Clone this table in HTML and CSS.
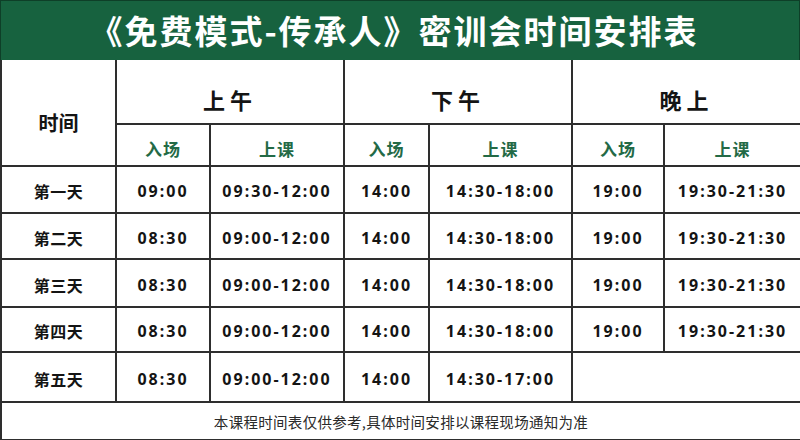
FILE: index.html
```html
<!DOCTYPE html>
<html lang="zh">
<head>
<meta charset="utf-8">
<title>密训会时间安排表</title>
<link rel="stylesheet" href="styles.css">
</head>
<body>
<div class="sheet">
  <div class="title">《免费模式-传承人》密训会时间安排表</div>
  <table class="grid">
    <colgroup>
      <col class="c1"><col class="c2"><col class="c3"><col class="c4"><col class="c5"><col class="c6"><col class="c7">
    </colgroup>
    <tr class="r-period">
      <td rowspan="2" class="label-time"><span>时间</span></td>
      <td colspan="2" class="period">上午</td>
      <td colspan="2" class="period">下午</td>
      <td colspan="2" class="period">晚上</td>
    </tr>
    <tr class="r-sub">
      <td class="sub">入场</td><td class="sub">上课</td>
      <td class="sub">入场</td><td class="sub">上课</td>
      <td class="sub">入场</td><td class="sub">上课</td>
    </tr>
    <tr class="r-d1">
      <td class="day">第一天</td><td class="t">09:00</td><td class="t">09:30-12:00</td><td class="t">14:00</td><td class="t">14:30-18:00</td><td class="t">19:00</td><td class="t">19:30-21:30</td>
    </tr>
    <tr class="r-d2">
      <td class="day">第二天</td><td class="t">08:30</td><td class="t">09:00-12:00</td><td class="t">14:00</td><td class="t">14:30-18:00</td><td class="t">19:00</td><td class="t">19:30-21:30</td>
    </tr>
    <tr class="r-d3">
      <td class="day">第三天</td><td class="t">08:30</td><td class="t">09:00-12:00</td><td class="t">14:00</td><td class="t">14:30-18:00</td><td class="t">19:00</td><td class="t">19:30-21:30</td>
    </tr>
    <tr class="r-d4">
      <td class="day">第四天</td><td class="t">08:30</td><td class="t">09:00-12:00</td><td class="t">14:00</td><td class="t">14:30-18:00</td><td class="t">19:00</td><td class="t">19:30-21:30</td>
    </tr>
    <tr class="r-d5">
      <td class="day">第五天</td><td class="t">08:30</td><td class="t">09:00-12:00</td><td class="t">14:00</td><td class="t">14:30-17:00</td><td colspan="2"></td>
    </tr>
    <tr class="r-note">
      <td colspan="7" class="note">本课程时间表仅供参考,具体时间安排以课程现场通知为准</td>
    </tr>
  </table>
</div>
</body>
</html>
```

FILE: styles.css
```css
html, body {
  margin: 0;
  padding: 0;
  background: #ffffff;
}
.sheet {
  width: 800px;
  height: 440px;
  overflow: hidden;
  font-family: "Noto Sans CJK SC", "Noto Sans", sans-serif;
  color: #141414;
}
.title {
  height: 60px;
  box-sizing: border-box;
  background: #17623f;
  border-top: 1px solid #0e3f28;
  border-left: 1px solid #0e3f28;
  border-right: 1px solid #0e3f28;
  color: #ffffff;
  font-weight: 700;
  font-size: 33px;
  letter-spacing: 2px;
  line-height: 58px;
  text-align: center;
  padding-right: 12px;
}
.grid {
  width: 800px;
  border-collapse: collapse;
  table-layout: fixed;
}
.grid td {
  border: 2px solid #2e2e2e;
  padding: 0;
  text-align: center;
  vertical-align: middle;
}
.grid tr:first-child td { border-top: none; }
.c1 { width: 115px; }
.c2 { width: 94px; }
.c3 { width: 134px; }
.c4 { width: 85px; }
.c5 { width: 143px; }
.c6 { width: 92px; }
.c7 { width: 137px; }

.r-period td { height: 64px; }
.r-sub td { height: 42px; }
.r-d1 td { height: 47px; }
.r-d2 td { height: 46px; }
.r-d3 td { height: 48px; }
.r-d4 td { height: 45px; }
.r-d5 td { height: 48px; }
.r-note td { height: 36px; }

.label-time {
  font-weight: 700;
  font-size: 20px;
  padding-top: 20px !important;
  box-sizing: border-box;
}
.period {
  font-weight: 700;
  font-size: 22px;
  letter-spacing: 5px;
  padding-top: 14px !important;
  box-sizing: border-box;
}
.sub {
  color: #236a46;
  font-weight: 700;
  font-size: 17px;
  letter-spacing: 1px;
  padding-top: 6px !important;
  box-sizing: border-box;
}
.day {
  font-weight: 700;
  font-size: 16px;
  letter-spacing: 0.5px;
  padding-top: 3px !important;
  box-sizing: border-box;
}
.t {
  font-family: "Noto Sans", "Noto Sans CJK SC", sans-serif;
  font-weight: 700;
  font-size: 16px;
  letter-spacing: 2px;
  padding-top: 3px !important;
  box-sizing: border-box;
}
.note {
  font-size: 14.5px;
  color: #2a2a2a;
  letter-spacing: 0.3px;
}
```
